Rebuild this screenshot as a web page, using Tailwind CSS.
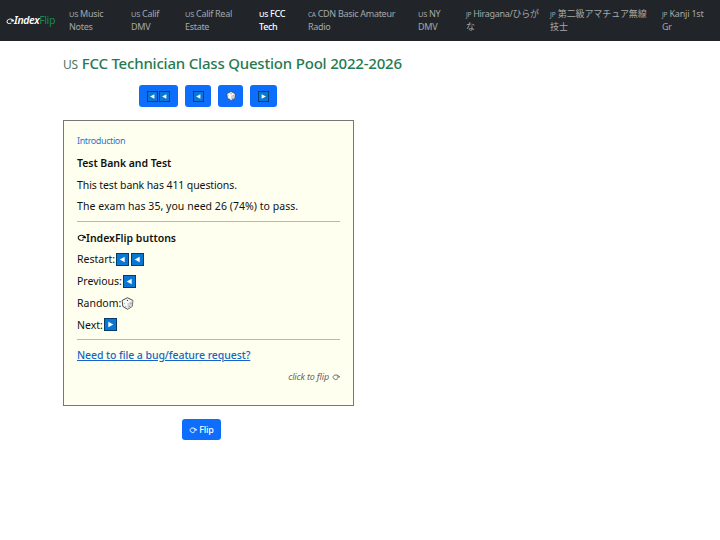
<!DOCTYPE html>
<html lang="en">
<head>
<meta charset="utf-8">
<title>IndexFlip</title>
<script src="https://cdn.jsdelivr.net/npm/@tailwindcss/browser@4"></script>
</head>
<body class="bg-white font-['Noto_Sans','Noto_Sans_CJK_JP',sans-serif] text-[#111] w-[720px] h-[540px] overflow-hidden">
<svg class="hidden">
  <symbol id="loop" viewBox="0 0 10 10"><path d="M8.1 4.6A3.4 2.8 0 1 0 7.2 7.2M6.1 5.1H9.6L8 3.2" fill="none" stroke="currentColor" stroke-width="1.2"/></symbol>
  <symbol id="prev" viewBox="0 0 13 13"><rect x=".5" y=".5" width="12" height="12" fill="#0878d4" stroke="#063a68"/><path d="M8.7 3.7V9.3L3.7 6.5Z" fill="#fff"/></symbol>
  <symbol id="next" viewBox="0 0 13 13"><rect x=".5" y=".5" width="12" height="12" fill="#0878d4" stroke="#063a68"/><path d="M4.3 3.7V9.3L9.3 6.5Z" fill="#fff"/></symbol>
  <symbol id="die" viewBox="0 0 12 12"><path d="M6 .7L11 3.2L10.3 8.7L6 11.3L1.7 8.7L1 3.2Z" fill="#fafafa" stroke="#444" stroke-width=".9"/><path d="M6 5.8V11L10.2 8.5L10.7 3.5Z" fill="#d4d4d4"/><g fill="#444"><circle cx="6" cy="3.2" r=".6"/><circle cx="3" cy="5.8" r=".4"/><circle cx="4.5" cy="8.5" r=".4"/><circle cx="7.6" cy="8.5" r=".4"/><circle cx="9.2" cy="5.8" r=".4"/></g></symbol>
</svg>
<nav class="h-[41px] bg-[#212529] flex items-center text-[9px] leading-[13px] text-[#a6a8a9] whitespace-nowrap tracking-[-0.3px]">
  <a class="w-[63px] pl-[6px] flex items-center text-[10.5px] tracking-[-0.4px]"><svg class="w-[8px] h-[8px] text-white -skew-x-12"><use href="#loop"/></svg><b class="italic font-semibold text-white">Index</b><span class="text-[#198754]">Flip</span></a>
  <div class="grid grid-cols-[62px_54px_74px_49px_110px_48px_84px_112px_58px] pl-[6px] pb-px">
    <a><span class="text-[7.5px] leading-none">US</span> Music<br>Notes</a>
    <a><span class="text-[7.5px] leading-none">US</span> Calif<br>DMV</a>
    <a><span class="text-[7.5px] leading-none">US</span> Calif Real<br>Estate</a>
    <a class="text-white font-medium"><span class="text-[7.5px] leading-none">US</span> FCC<br>Tech</a>
    <a><span class="text-[6.5px] leading-none">CA</span> CDN Basic Amateur<br>Radio</a>
    <a><span class="text-[7.5px] leading-none">US</span> NY<br>DMV</a>
    <a><span class="text-[6.5px] leading-none">JP</span> Hiragana/ひらが<br>な</a>
    <a class="tracking-[-0.1px]"><span class="text-[6.5px] leading-none">JP</span> 第二級アマチュア無線<br>技士</a>
    <a class="tracking-[-0.2px]"><span class="text-[6.5px] leading-none">JP</span> Kanji 1st<br>Gr</a>
  </div>
</nav>
<main class="ml-[63px] w-[291px]">
  <h1 class="h-[44px] leading-[44px] text-[15px] font-medium text-[#267a50] whitespace-nowrap tracking-[-0.2px]"><span class="text-[12px] font-normal text-[#4f7564]">US</span> FCC Technician Class Question Pool 2022-2026</h1>
  <div class="flex gap-[7px] pl-[76px] h-[22px]">
    <button class="w-[39px] rounded-[3px] bg-[#0d6efd] flex items-center justify-center gap-[1px]"><svg class="w-[11px] h-[11px]"><use href="#prev"/></svg><svg class="w-[11px] h-[11px]"><use href="#prev"/></svg></button>
    <button class="w-[26px] rounded-[3px] bg-[#0d6efd] flex items-center justify-center"><svg class="w-[11px] h-[11px]"><use href="#prev"/></svg></button>
    <button class="w-[25px] rounded-[3px] bg-[#0d6efd] flex items-center justify-center"><svg class="w-[10px] h-[10px]"><use href="#die"/></svg></button>
    <button class="w-[27px] rounded-[3px] bg-[#0d6efd] flex items-center justify-center"><svg class="w-[11px] h-[11px]"><use href="#next"/></svg></button>
  </div>
  <section class="mt-[13px] h-[286px] border border-[#777] bg-[#fffff0] px-[13px] pt-[9px] text-[10.5px] leading-[22px] whitespace-nowrap">
    <div class="h-[22px] text-[9px] text-[#2b76d2] tracking-[-0.4px]">Introduction</div>
    <h2 class="h-[22px] font-semibold tracking-[-0.05px]">Test Bank and Test</h2>
    <p class="h-[21px] tracking-[-0.1px]">This test bank has 411 questions.</p>
    <p class="h-[22px] tracking-[0.04px]">The exam has 35, you need 26 (74%) to pass.</p>
    <hr class="mt-[4px] border-[#b9b9b0]">
    <h2 class="mt-[5px] h-[21px] flex items-center font-semibold"><svg class="w-[9px] h-[9px]"><use href="#loop"/></svg>IndexFlip buttons</h2>
    <p class="h-[22px] flex items-center">Restart:<svg class="w-[13px] h-[13px] ml-px"><use href="#prev"/></svg><svg class="w-[13px] h-[13px] ml-[2px]"><use href="#prev"/></svg></p>
    <p class="h-[22px] flex items-center">Previous:<svg class="w-[13px] h-[13px] ml-px"><use href="#prev"/></svg></p>
    <p class="h-[22px] flex items-center">Random:<svg class="w-[13px] h-[13px]"><use href="#die"/></svg></p>
    <p class="h-[21px] flex items-center">Next:<svg class="w-[13px] h-[13px] ml-px"><use href="#next"/></svg></p>
    <hr class="mt-[4px] border-[#b9b9b0]">
    <p class="mt-[4px] h-[22px]"><a class="underline text-[#1766c6] font-medium tracking-[-0.07px]">Need to file a bug/feature request?</a></p>
    <p class="h-[22px] flex items-center justify-end gap-[3px] text-[9px] italic text-[#666] tracking-[-0.15px]">click to flip <svg class="w-[8px] h-[8px]"><use href="#loop"/></svg></p>
  </section>
  <button class="mt-[13px] ml-[119px] w-[39px] h-[21px] rounded-[3px] bg-[#0d6efd] text-white text-[9px] font-medium tracking-[-0.2px] flex items-center justify-center gap-[2px]"><svg class="w-[8px] h-[8px]"><use href="#loop"/></svg>Flip</button>
</main>
</body>
</html>
